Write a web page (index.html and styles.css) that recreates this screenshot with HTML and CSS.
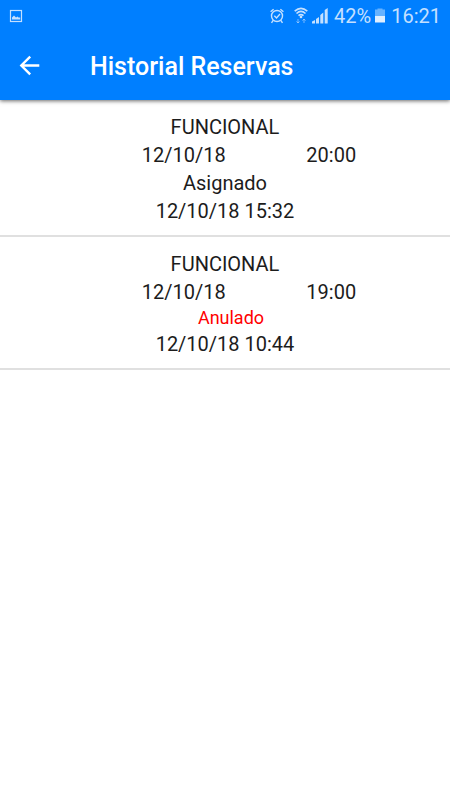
FILE: index.html
```html
<!DOCTYPE html>
<html lang="es">
<head>
  <meta charset="UTF-8" />
  <meta name="viewport" content="width=device-width, initial-scale=1.0"/>
  <title>Historial Reservas</title>
  <link rel="stylesheet" href="styles.css">
</head>
<body>

  <header class="top">
    <div class="status-bar">
      <svg class="notif" width="14" height="14" viewBox="0 0 14 14">
        <rect x="1.5" y="1.5" width="11" height="11" fill="none" stroke="currentColor" stroke-width="1.2"/>
        <path d="M3 10.5V8.5L5 6.5L7 8.5L8.5 7.5L9.5 8.5H11.2V10.5Z" fill="currentColor"/>
      </svg>

      <svg width="14" height="16" viewBox="0 0 14 16" fill="none" stroke="currentColor" stroke-width="1.4">
        <circle cx="7" cy="8" r="5.5"/>
        <path d="M4.3 7.8L6.5 10L10 6M0.6 3.8L3.6 1.2M13.4 3.8L10.4 1.2M3.2 12.3L1.5 14.8M10.8 12.3L12.5 14.8"/>
      </svg>
      <svg class="wifi" width="14" height="18" viewBox="0 0 14 18" fill="none" stroke="currentColor" stroke-width="1.6">
        <path d="M0.7 4.2Q7 -1.6 13.3 4.2M2.5 6.5Q7 2.2 11.5 6.5M4.5 8.7Q7 6.4 9.5 8.7"/>
        <circle cx="7" cy="10" r="1.3" fill="currentColor" stroke="none"/>
        <path d="M4 12V16M2.5 14.4L4 16L5.5 14.4M10 16V12M8.5 13.6L10 12L11.5 13.6" stroke-width="1" opacity=".6"/>
      </svg>
      <svg class="signal" width="16" height="16" viewBox="0 0 16 16" fill="currentColor">
        <path d="M0 13.5L3 12V15.5H0ZM4 11L7 9V15.5H4ZM8.3 7L11.3 4.5V15.5H8.3ZM12.7 2L15.7 0V15.5H12.7Z"/>
      </svg>
      <span class="percent">42%</span>
      <svg class="battery" width="10" height="16" viewBox="0 0 10 16">
        <path d="M0 1.5H2.5V0.5H7.5V1.5H10V8H0Z" fill="#66b2ff"/>
        <path d="M0 8H10V14.5H0Z" fill="#e0efff"/>
      </svg>
      <span class="clock">16:21</span>
    </div>

    <div class="toolbar">
      <button class="back-btn" aria-label="Volver">
        <svg width="22" height="22" viewBox="0 0 22 22" fill="none" stroke="currentColor" stroke-width="2.4">
          <path d="M21.3 10.5H3.5M12.2 1.6L3.3 10.5L12.2 19.4"/>
        </svg>
      </button>
      <h1 class="title">Historial Reservas</h1>
    </div>
  </header>

  <main class="history">
    <div class="reserva">
      <p>FUNCIONAL</p>
      <div class="when">
        <span>12/10/18</span>
        <span>20:00</span>
      </div>
      <p>Asignado</p>
      <p>12/10/18 15:32</p>
    </div>

    <div class="reserva">
      <p>FUNCIONAL</p>
      <div class="when">
        <span>12/10/18</span>
        <span>19:00</span>
      </div>
      <p class="anulado">Anulado</p>
      <p>12/10/18 10:44</p>
    </div>
  </main>

</body>
</html>
```

FILE: styles.css
```css
* {
  box-sizing: border-box;
}

body {
  margin: 0;
  background: #fff;
  color: #1c1c1c;
  font-family: Roboto, sans-serif;
  font-size: 20px;
}

.top {
  background: #007fff;
  color: #fff;
  box-shadow: 0 1px 4px rgba(0, 0, 0, 0.6);
}

.status-bar {
  display: flex;
  align-items: center;
  height: 32px;
  padding: 0 9px;
  color: #c4e0ff;
}

.notif {
  margin-right: auto;
}

.wifi {
  margin-left: 10px;
}

.signal {
  margin-left: 4px;
}

.percent {
  margin-left: 6px;
}

.battery {
  margin: 0 6px 0 4px;
}

.toolbar {
  display: flex;
  align-items: center;
  height: 68px;
  padding: 0 18px;
}

.back-btn {
  display: flex;
  padding: 0;
  border: none;
  background: transparent;
  color: #fff;
  cursor: pointer;
}

.title {
  margin: 0 0 0 50px;
  font-size: 25px;
  font-weight: 500;
}

.reserva {
  padding: 13px 0 10px;
  border-bottom: 2px solid #e0e0e0;
  line-height: 28px;
  text-align: center;
}

.reserva p {
  margin: 0;
}

.when {
  display: grid;
  grid-template-columns: 1fr 1fr;
  padding: 0 45px 0 110px;
}

.reserva .anulado {
  padding-left: 12px;
  color: #f00;
  font-size: 18px;
  line-height: 24px;
}
```
